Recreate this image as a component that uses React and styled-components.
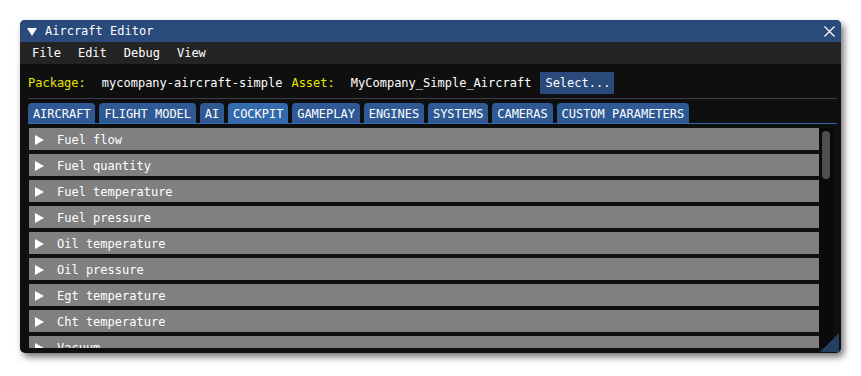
import React from "react";
import styled, { createGlobalStyle } from "styled-components";

const Global = createGlobalStyle`
  html, body { margin: 0; padding: 0; background: #ffffff; }
  body { font-family: "DejaVu Sans Mono", "Liberation Mono", monospace; font-size: 12px; }
  * { box-sizing: border-box; }
`;

const Page = styled.div`
  padding: 20px 0 0 20px;
  width: 861px;
  height: 376px;
`;

const Window = styled.div`
  width: 821px;
  height: 333px;
  border-radius: 5px;
  overflow: hidden;
  background: #0f0f0f;
  display: flex;
  flex-direction: column;
  box-shadow: 3px 4px 7px rgba(0, 0, 0, 0.55);
  position: relative;
`;

const TitleBar = styled.div`
  height: 22px;
  background: #294a7a;
  color: #ffffff;
  display: flex;
  align-items: center;
  padding: 1px 6px 0 7px;
  gap: 8px;
  flex-shrink: 0;
`;

const TitleText = styled.span`
  flex: 1;
  line-height: 21px;
  white-space: pre;
`;

const MenuBar = styled.div`
  height: 22px;
  background: #242424;
  display: flex;
  align-items: center;
  padding-left: 4px;
  gap: 1px;
  flex-shrink: 0;
`;

const MenuItem = styled.span`
  color: #ffffff;
  padding: 0 8px;
  line-height: 23px;
`;

const Content = styled.div`
  flex: 1;
  display: flex;
  flex-direction: column;
  padding: 8px 8px 5px 8px;
  min-height: 0;
`;

const InfoRow = styled.div`
  height: 22px;
  line-height: 23px;
  display: flex;
  align-items: center;
  white-space: pre;
  flex-shrink: 0;
`;

const Label = styled.span`
  color: #e6e600;
  margin-right: ${(p) => p.$gap}px;
`;

const Value = styled.span`
  color: #ffffff;
  margin-right: ${(p) => p.$gap}px;
`;

const Button = styled.span`
  height: 22px;
  line-height: 23px;
  padding: 0 4px 0 5px;
  background: #294a7a;
  color: #ffffff;
`;

const Separator = styled.div`
  height: 1px;
  background: #3e3e45;
  margin: 4px -4px 4px 0;
  flex-shrink: 0;
`;

const TabBar = styled.div`
  display: flex;
  gap: 4px;
  height: 21px;
  border-bottom: 1px solid #3369ad;
  margin-right: -4px;
  flex-shrink: 0;
`;

const Tab = styled.span`
  height: 20px;
  line-height: 22px;
  padding: 0 4.8px 0 4.9px;
  border-radius: 4px 4px 0 0;
  color: #ffffff;
  background: ${(p) => (p.$active ? "#3369ad" : "#2e5994")};
`;

const ListArea = styled.div`
  margin-top: 4px;
  flex: 1;
  display: flex;
  min-height: 0;
  overflow: hidden;
`;

const List = styled.div`
  flex: 1;
  display: flex;
  flex-direction: column;
  gap: 4px;
  overflow: hidden;
  padding-left: 1px;
`;

const Row = styled.div`
  height: 22px;
  flex-shrink: 0;
  background: #808080;
  color: #ffffff;
  display: flex;
  align-items: center;
  padding: 1px 0 0 6px;
  gap: 13px;
  white-space: pre;
`;

const ScrollTrack = styled.div`
  width: 14px;
  background: #0a0a0a;
  padding: 3px 3px;
  flex-shrink: 0;
`;

const ScrollThumb = styled.div`
  width: 8px;
  height: 48px;
  border-radius: 4px;
  background: #4f4f4f;
`;

const Grip = styled.svg`
  position: absolute;
  right: 2px;
  bottom: 1px;
`;

const rows = [
  "Fuel flow",
  "Fuel quantity",
  "Fuel temperature",
  "Fuel pressure",
  "Oil temperature",
  "Oil pressure",
  "Egt temperature",
  "Cht temperature",
  "Vacuum",
];

const tabs = [
  "AIRCRAFT",
  "FLIGHT MODEL",
  "AI",
  "COCKPIT",
  "GAMEPLAY",
  "ENGINES",
  "SYSTEMS",
  "CAMERAS",
  "CUSTOM PARAMETERS",
];

const RightArrow = () => (
  <svg width="9" height="10" viewBox="0 0 9 10">
    <polygon points="0,0 9,5 0,10" fill="#ffffff" />
  </svg>
);

const DownArrow = () => (
  <svg width="10" height="8" viewBox="0 0 10 8">
    <polygon points="0,0 10,0 5,8" fill="#ffffff" />
  </svg>
);

const CloseIcon = () => (
  <svg width="11" height="11" viewBox="0 0 11 11">
    <path d="M0.5 0.5 L10.5 10.5 M10.5 0.5 L0.5 10.5" stroke="#ffffff" strokeWidth="1.2" fill="none" />
  </svg>
);

export default function App() {
  return (
    <Page>
      <Global />
      <Window>
        <TitleBar>
          <DownArrow />
          <TitleText>Aircraft Editor</TitleText>
          <CloseIcon />
        </TitleBar>
        <MenuBar>
          {["File", "Edit", "Debug", "View"].map((m) => (
            <MenuItem key={m}>{m}</MenuItem>
          ))}
        </MenuBar>
        <Content>
          <InfoRow>
            <Label $gap={16}>Package:</Label>
            <Value $gap={9}>mycompany-aircraft-simple</Value>
            <Label $gap={16}>Asset:</Label>
            <Value $gap={9}>MyCompany_Simple_Aircraft</Value>
            <Button>Select...</Button>
          </InfoRow>
          <Separator />
          <TabBar>
            {tabs.map((t) => (
              <Tab key={t} $active={t === "COCKPIT"}>
                {t}
              </Tab>
            ))}
          </TabBar>
          <ListArea>
            <List>
              {rows.map((r) => (
                <Row key={r}>
                  <RightArrow />
                  <span>{r}</span>
                </Row>
              ))}
            </List>
            <ScrollTrack>
              <ScrollThumb />
            </ScrollTrack>
          </ListArea>
        </Content>
        <Grip width="19" height="19" viewBox="0 0 19 19">
          <polygon points="19,0 19,19 0,19" fill="#233f62" />
        </Grip>
      </Window>
    </Page>
  );
}
